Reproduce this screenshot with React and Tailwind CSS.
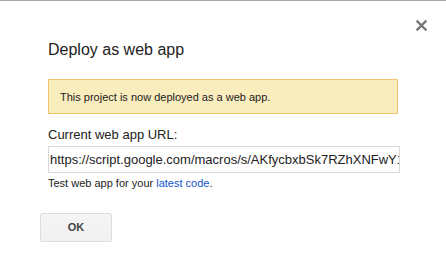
export default function App() {
    return (
        <div className="relative w-[446px] h-[267px] overflow-hidden bg-white border-t border-[#aaaaaa] font-['Liberation_Sans',Arial,sans-serif] text-[#222]">
            <button className="absolute top-[18px] right-[19px] w-[12px] h-[12px] flex items-center justify-center" aria-label="Close">
                <svg width="11" height="11" viewBox="0 0 11 11" fill="none" stroke="#777" strokeWidth="2.4" strokeLinecap="square">
                    <path d="M1.5 1.5l8 8M9.5 1.5l-8 8" />
                </svg>
            </button>
            <div className="pl-[40px] pt-[39px]">
                <div className="pl-[8px]">
                    <h1 className="text-[16px] leading-[20px] font-normal">Deploy as web app</h1>
                    <div className="mt-[19px] w-[350px] border border-[#f0c36d] bg-[#f9edbe] pl-[11px] pt-[11px] pb-[9px] text-[11px] leading-[13px]">
                        This project is now deployed as a web app.
                    </div>
                    <div className="mt-[13px] text-[13px] leading-[15px]">Current web app URL:</div>
                    <input
                        type="text"
                        readOnly
                        value="https://script.google.com/macros/s/AKfycbxbSk7RZhXNFwY1a9Qx3kLmPz0sT/exec"
                        className="mt-[4px] block w-[352px] h-[27px] border border-[#d9d9d9] pl-[1px] text-[13px] leading-[15px] text-[#222] outline-none"
                    />
                    <div className="mt-[4px] text-[11px] leading-[13px]">
                        Test web app for your <a href="#" className="text-[#15c]">latest code</a>.
                    </div>
                </div>
                <button className="mt-[23px] w-[72px] h-[29px] rounded-[2px] border border-[#dcdcdc] bg-gradient-to-b from-[#f5f5f5] to-[#f1f1f1] text-[11px] font-bold text-[#444]">
                    OK
                </button>
            </div>
        </div>
    )
}
